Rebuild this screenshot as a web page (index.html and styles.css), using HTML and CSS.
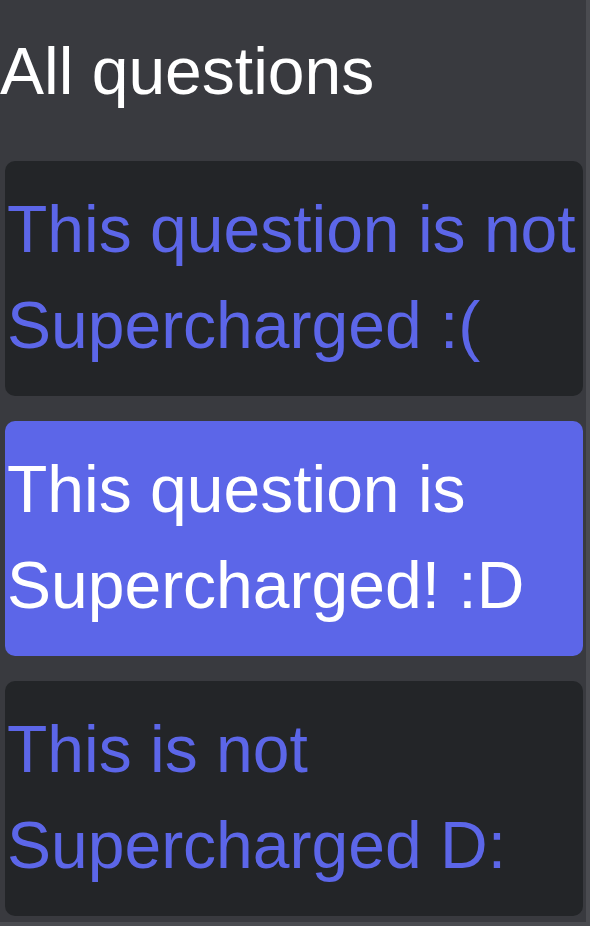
FILE: index.html
```html
<!DOCTYPE html>
<html lang="en">
<head>
<meta charset="utf-8">
<title>All questions</title>
<link rel="stylesheet" href="styles.css">
</head>
<body>
<main class="page">
  <h1 class="title">All questions</h1>
  <ul class="questions">
    <li class="question">This question is not Supercharged :(</li>
    <li class="question question--super">This question is Supercharged! :D</li>
    <li class="question">This is not Supercharged D:</li>
  </ul>
</main>
</body>
</html>
```

FILE: styles.css
```css
html {
  background: #4a4b50;
}
body {
  margin: 0;
  font-family: "Liberation Sans", Arial, sans-serif;
}
.page {
  width: 586px;
  height: 922px;
  background: #393a3f;
  box-sizing: border-box;
  padding-top: 23px;
  overflow: hidden;
}
.title {
  margin: 0 0 42px 0;
  font-size: 66px;
  line-height: 96px;
  font-weight: 400;
  color: #ffffff;
}
.questions {
  list-style: none;
  margin: 0 0 0 5px;
  padding: 0;
  width: 578px;
  display: flex;
  flex-direction: column;
  gap: 25px;
}
.question {
  height: 235px;
  box-sizing: border-box;
  padding: 20px 2px 24px 2px;
  background: #232528;
  color: #5c66e8;
  border-radius: 10px;
  font-size: 66px;
  line-height: 96px;
}
.question--super {
  background: #5c66e8;
  color: #ffffff;
}
```
